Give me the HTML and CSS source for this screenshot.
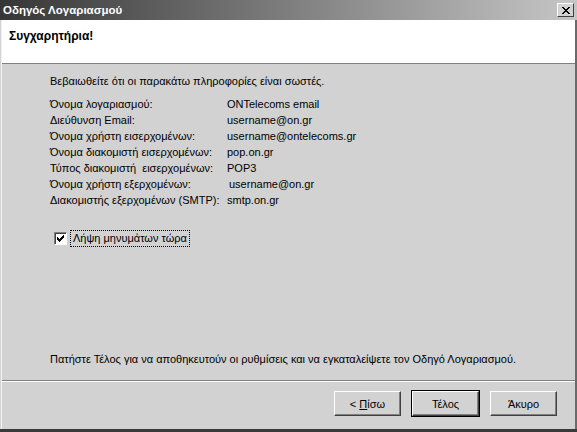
FILE: index.html
```html
<!DOCTYPE html>
<html>

<head>
    <meta charset="UTF-8">
    <title>Οδηγός Λογαριασμού</title>
    <link rel="stylesheet" href="styles.css">
</head>

<body>
    <div class="window">
        <div class="titlebar">
            <span class="title">Οδηγός Λογαριασμού</span>
            <span class="close">
                <svg width="8" height="7" viewBox="0 0 8 7">
                    <path d="M0 0h2v1h1v1h2v-1h1v-1h2v1h-1v1h-1v1h-1v1h1v1h1v1h1v1h-2v-1h-1v-1h-2v1h-1v1h-2v-1h1v-1h1v-1h1v-1h-1v-1h-1v-1h-1z" fill="#000"/>
                </svg>
            </span>
        </div>
        <div class="frame">
            <div class="header">
                <p class="heading">Συγχαρητήρια!</p>
            </div>
            <div class="content">
                <p class="intro">Βεβαιωθείτε ότι οι παρακάτω πληροφορίες είναι σωστές.</p>
                <div class="summary">
                    <span>Όνομα λογαριασμού:</span><span>ONTelecoms email</span>
                    <span>Διεύθυνση Email:</span><span>username@on.gr</span>
                    <span>Όνομα χρήστη εισερχομένων:</span><span>username@ontelecoms.gr</span>
                    <span>Όνομα διακομιστή εισερχομένων:</span><span>pop.on.gr</span>
                    <span>Τύπος διακομιστή&nbsp; εισερχομένων:</span><span>POP3</span>
                    <span>Όνομα χρήστη εξερχομένων:</span><span class="shift">username@on.gr</span>
                    <span>Διακομιστής εξερχομένων (SMTP):</span><span>smtp.on.gr</span>
                </div>
                <label class="check">
                    <span class="box">
                        <svg width="7" height="7" viewBox="0 0 7 7">
                            <path d="M6 0h1v3h-1v1h-1v1h-1v1h-1v1h-1v-1h-1v-1h-1v-3h1v1h1v1h1v-1h1v-1h1v-1h1z" fill="#000"/>
                        </svg>
                    </span>
                    <span class="focus">Λήψη μηνυμάτων τώρα</span>
                </label>
                <p class="note">Πατήστε Τέλος για να αποθηκευτούν οι ρυθμίσεις και να εγκαταλείψετε τον Οδηγό Λογαριασμού.</p>
            </div>
            <div class="buttons">
                <button>&lt; <u>Π</u>ίσω</button>
                <button class="default">Τέλος</button>
                <button>Άκυρο</button>
            </div>
        </div>
    </div>
</body>

</html>
```
FILE: styles.css
```css
* {
    box-sizing: border-box;
}

body {
    margin: 0;
    background-color: #d1d1d1;
    font-family: "Liberation Sans", Arial, sans-serif;
    font-size: 11px;
    color: #000;
}

p {
    margin: 0;
}

.window {
    width: 577px;
    height: 432px;
    display: flex;
    flex-direction: column;
    background-color: #d2d2d2;
    border-bottom: 3px solid #3a3a3a;
}

.titlebar {
    height: 20px;
    flex: none;
    display: flex;
    align-items: center;
    padding: 0 3px 0 3px;
    background: linear-gradient(to right, #363636, #c6c6c6);
}

.title {
    flex: 1;
    color: #fff;
    font-weight: bold;
    font-size: 11.5px;
}

.close {
    width: 17px;
    height: 14px;
    display: flex;
    align-items: center;
    justify-content: center;
    background-color: #d2d2d2;
    border: 1px solid;
    border-color: #fff #404040 #404040 #fff;
}

.frame {
    flex: 1;
    display: flex;
    flex-direction: column;
    margin-left: 1px;
    border-left: 1px solid #f2f2f2;
    border-right: 2px solid #6a6a6a;
}

.header {
    height: 44px;
    flex: none;
    background-color: #fff;
    border-bottom: 1px solid #808080;
    padding: 9px 0 0 7px;
}

.heading {
    font-weight: bold;
    font-size: 12px;
}

.content {
    flex: 1;
    display: flex;
    flex-direction: column;
    padding: 9px 0 13px 48px;
    border-bottom: 1px solid #808080;
    line-height: 16px;
}

.summary {
    display: grid;
    grid-template-columns: 177px auto;
    margin-top: 7px;
}

.shift {
    padding-left: 2px;
}

.check {
    display: flex;
    align-items: center;
    gap: 3px;
    margin: 22px 0 0 4px;
}

.box {
    width: 13px;
    height: 13px;
    display: flex;
    align-items: center;
    justify-content: center;
    background-color: #fff;
    border: 1px solid;
    border-color: #808080 #fff #fff #808080;
    box-shadow: inset 1px 1px #404040;
}

.focus {
    padding: 0 2px;
    line-height: 15px;
    border: 1px dotted #000;
}

.note {
    margin-top: auto;
}

.buttons {
    height: 48px;
    flex: none;
    display: flex;
    justify-content: flex-end;
    align-items: flex-start;
    gap: 11px;
    padding: 9px 18px 0 0;
    border-top: 1px solid #fff;
}

button {
    width: 67px;
    height: 25px;
    font-family: "Liberation Sans", Arial, sans-serif;
    font-size: 11px;
    color: #000;
    background-color: #d2d2d2;
    border: 1px solid;
    border-color: #fff #404040 #404040 #fff;
    box-shadow: inset -1px -1px #808080;
    padding: 0;
}

.default {
    outline: 1px solid #000;
}
```
